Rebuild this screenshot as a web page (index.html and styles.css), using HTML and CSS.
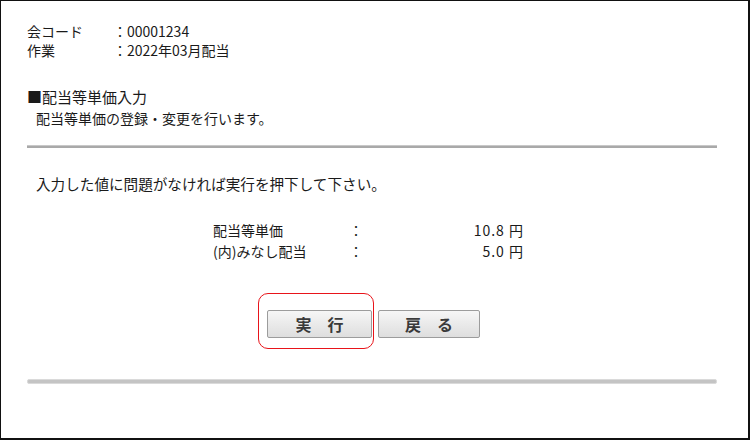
FILE: index.html
```html
<!DOCTYPE html>
<html lang="ja">
<head>
<meta charset="utf-8">
<link rel="stylesheet" href="styles.css">
</head>
<body>
<div class="frame">
  <div class="info">
    <div class="info-label">会コード</div><div class="info-value">：00001234</div>
    <div class="info-label">作業</div><div class="info-value">：2022年03月配当</div>
  </div>
  <div class="heading">■配当等単価入力</div>
  <div class="subtext">配当等単価の登録・変更を行います。</div>
  <hr class="rule">
  <div class="message">入力した値に問題がなければ実行を押下して下さい。</div>
  <div class="values">
    <div class="v-label">配当等単価</div><div class="v-colon">：</div><div class="v-num">10.8 円</div>
    <div class="v-label">(内)みなし配当</div><div class="v-colon">：</div><div class="v-num">5.0 円</div>
  </div>
  <div class="actions">
    <div class="btn-wrap">
      <button class="btn btn-exec">実　行</button>
      <span class="highlight"></span>
    </div>
    <button class="btn btn-back">戻　る</button>
  </div>
  <div class="rule-bottom"></div>
</div>
</body>
</html>
```
FILE: styles.css
```css
html, body {
  margin: 0;
  padding: 0;
  background: #ffffff;
}
.frame {
  box-sizing: border-box;
  width: 750px;
  height: 440px;
  border-top: 1px solid #111;
  border-left: 1px solid #111;
  border-right: 2px solid #111;
  border-bottom: 2px solid #111;
  padding: 0 31px 0 26px;
  font-family: "Noto Sans CJK JP", "Noto Sans", sans-serif;
  font-size: 14px;
  color: #1a1a1a;
}
.info {
  display: grid;
  grid-template-columns: 86px auto;
  line-height: 19px;
  padding-top: 21px;
}
.heading {
  margin-top: 27px;
  font-size: 15px;
  line-height: 20px;
}
.subtext {
  padding-left: 9px;
  line-height: 20px;
  margin-top: 1px;
}
.rule {
  margin: 17px 0 0;
  border: 0;
  height: 3px;
  background: #a9a9a9;
  border-top: 1px solid #c8c8c8;
  box-sizing: border-box;
}
.message {
  margin-top: 26px;
  padding-left: 9px;
  font-size: 14.6px;
  line-height: 20px;
}
.values {
  display: grid;
  grid-template-columns: 136px 24px 151px;
  margin-left: 186px;
  margin-top: 26px;
  line-height: 21px;
}
.v-num {
  text-align: right;
  letter-spacing: 1px;
}
.actions {
  display: flex;
  gap: 6px;
  padding-left: 240px;
  margin-top: 48px;
}
.btn-wrap {
  position: relative;
  display: flex;
}
.btn {
  height: 28px;
  padding: 0;
  border: 1px solid #9c9c9c;
  border-radius: 2px;
  background: linear-gradient(#f6f6f6, #dedede);
  font-family: "Noto Sans CJK JP", "Noto Sans", sans-serif;
  font-size: 16px;
  font-weight: bold;
  color: #3a3a3a;
  line-height: 24px;
}
.btn-exec {
  width: 105px;
}
.btn-back {
  width: 102px;
}
.highlight {
  position: absolute;
  left: -9px;
  top: -17px;
  width: 116px;
  height: 56px;
  border: 1.5px solid #e8141a;
  border-radius: 10px;
  box-sizing: border-box;
}
.rule-bottom {
  margin-top: 41px;
  height: 5px;
  box-sizing: border-box;
  background: #c4c4c4;
  border: 1px solid #dadada;
  border-radius: 2px;
}
```
